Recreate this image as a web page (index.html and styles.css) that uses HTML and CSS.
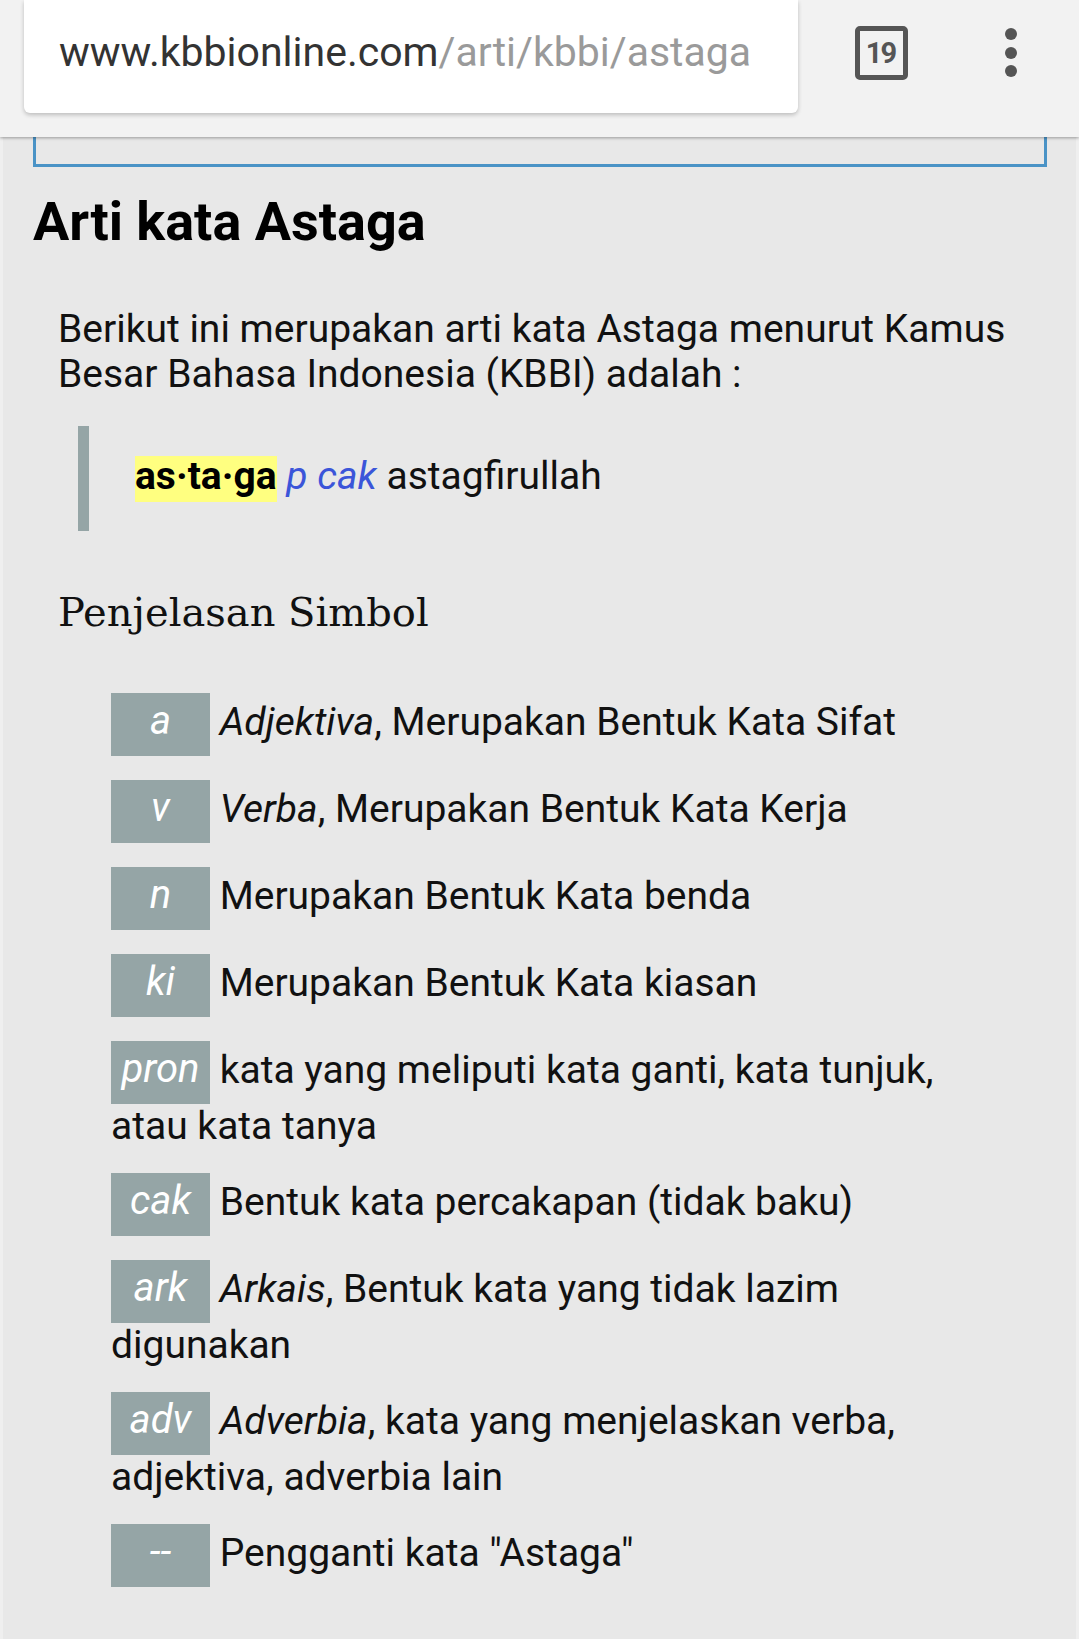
FILE: index.html
```html
<!DOCTYPE html>
<html lang="id">
<head>
<meta charset="utf-8">
<title>Arti kata Astaga</title>
<link rel="stylesheet" href="styles.css">
</head>
<body>
<header class="toolbar">
  <div class="urlbox"><span class="host">www.kbbionline.com</span><span class="path">/arti/kbbi/astaga</span></div>
  <div class="tabs">19</div>
  <div class="menu"><span></span><span></span><span></span></div>
</header>
<main class="page">
  <div class="content">
    <div class="adbox"></div>
    <h1 class="title">Arti kata Astaga</h1>
    <p class="intro">Berikut ini merupakan arti kata Astaga menurut Kamus Besar Bahasa Indonesia (KBBI) adalah :</p>
    <blockquote class="entry"><span class="hl">as·ta·ga</span> <i class="pos">p cak</i> astagfirullah</blockquote>
    <h2 class="subtitle">Penjelasan Simbol</h2>
    <ul class="symbols">
      <li><span class="badge">a</span> <i>Adjektiva</i>, Merupakan Bentuk Kata Sifat</li>
      <li><span class="badge">v</span> <i>Verba</i>, Merupakan Bentuk Kata Kerja</li>
      <li><span class="badge">n</span> Merupakan Bentuk Kata benda</li>
      <li><span class="badge">ki</span> Merupakan Bentuk Kata kiasan</li>
      <li><span class="badge">pron</span> kata yang meliputi kata ganti, kata tunjuk, atau kata tanya</li>
      <li><span class="badge">cak</span> Bentuk kata percakapan (tidak baku)</li>
      <li><span class="badge">ark</span> <i>Arkais</i>, Bentuk kata yang tidak lazim digunakan</li>
      <li><span class="badge">adv</span> <i>Adverbia</i>, kata yang menjelaskan verba, adjektiva, adverbia lain</li>
      <li><span class="badge">--</span> Pengganti kata "Astaga"</li>
    </ul>
  </div>
</main>
</body>
</html>
```

FILE: styles.css
```css
html, body {
  margin: 0;
  padding: 0;
}
body {
  background: #efefef;
  font-family: Roboto, "Liberation Sans", Arial, sans-serif;
  color: #111;
}

/* ---------- browser toolbar ---------- */
.toolbar {
  position: relative;
  z-index: 2;
  height: 137px;
  background: #f2f2f2;
  display: flex;
  align-items: flex-start;
  box-shadow: 0 1px 3px rgba(0, 0, 0, 0.35);
}
.urlbox {
  box-sizing: border-box;
  margin-left: 24px;
  width: 774px;
  height: 113px;
  padding: 30px 0 0 35px;
  background: #fff;
  border-radius: 0 0 6px 6px;
  box-shadow: 0 2px 4px rgba(0, 0, 0, 0.22);
  font-size: 41px;
  line-height: 45px;
  white-space: nowrap;
}
.host { color: #333; }
.path { color: #9a9a9a; }

.tabs {
  box-sizing: border-box;
  margin: 26px 0 0 57px;
  width: 53px;
  height: 54px;
  border: 5px solid #555;
  border-radius: 5px;
  color: #555;
  font-weight: 700;
  font-size: 29px;
  line-height: 44px;
  text-align: center;
  letter-spacing: -2px;
  text-indent: -2px;
}
.menu {
  margin: 28px 0 0 97px;
  display: flex;
  flex-direction: column;
  gap: 6.5px;
}
.menu span {
  display: block;
  width: 12px;
  height: 12px;
  border-radius: 50%;
  background: #555;
}

/* ---------- page ---------- */
.page {
  margin: 0 3px;
  background: #e8e8e8;
  min-height: calc(100vh - 137px);
  padding-bottom: 20px;
  box-sizing: border-box;
}
.content {
  padding: 0 29px 0 30px;
}
.adbox {
  height: 27px;
  border: 3px solid #4a93c6;
  border-top: 0;
}
.title {
  margin: 24px 0 0;
  font-size: 54px;
  line-height: 62px;
  font-weight: 700;
  color: #000;
}
.intro {
  margin: 54px 0 0;
  padding: 0 25px;
  font-size: 39px;
  line-height: 45px;
}
.entry {
  margin: 29px 0 0 45px;
  padding: 28px 0 32px 46px;
  border-left: 11px solid #95a5a6;
  font-size: 39px;
  line-height: 45px;
}
.hl {
  background: linear-gradient(to bottom, transparent 3px, #ffff80 3px);
  padding-bottom: 3px;
  font-weight: 700;
  color: #000;
}
.pos {
  color: #3b55d9;
}
.subtitle {
  margin: 56px 0 0;
  padding-left: 25px;
  font-family: "DejaVu Serif", "Liberation Serif", serif;
  font-weight: 400;
  font-size: 40px;
  line-height: 50px;
  color: #111;
}
.symbols {
  list-style: none;
  margin: 56px 72px 0 0;
  padding: 0 0 0 78px;
  font-size: 39px;
  line-height: 45px;
}
.symbols li {
  margin-bottom: 24px;
}
.badge {
  display: inline-block;
  box-sizing: border-box;
  width: 99px;
  height: 63px;
  background: #95a5a6;
  color: #fff;
  font-style: italic;
  font-size: 40px;
  line-height: 55px;
  text-align: center;
  vertical-align: 1px;
}
```
